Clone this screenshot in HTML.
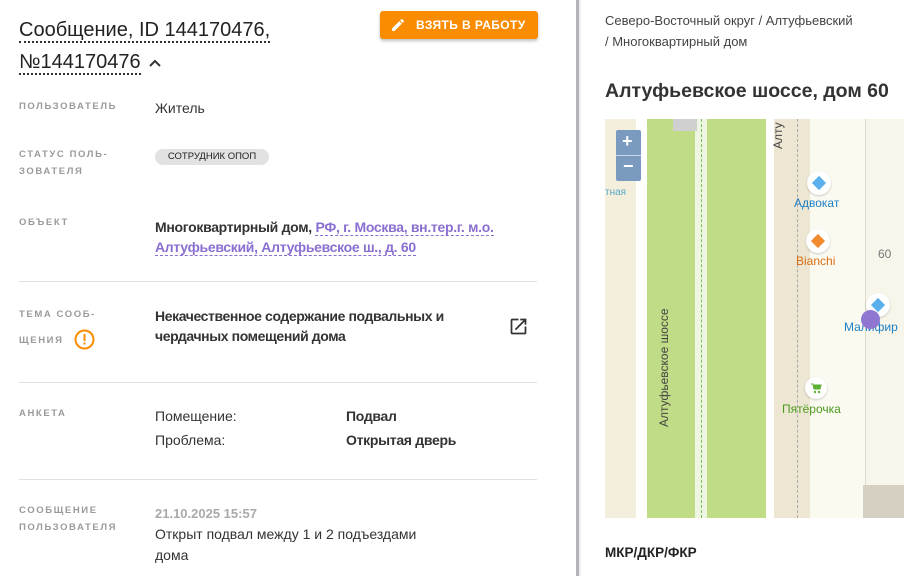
<!DOCTYPE html>
<html><head><meta charset="utf-8"><style>
*{margin:0;padding:0;box-sizing:border-box}
body{width:904px;height:576px;overflow:hidden;background:#fff;font-family:"Liberation Sans",sans-serif;color:#222;position:relative}
.a{position:absolute;white-space:nowrap}
.lab{font-size:9.5px;font-weight:bold;letter-spacing:1.6px;color:#9a9a9e;line-height:22px}
.val{font-size:14px;color:#333}
.hr{position:absolute;left:19px;width:518px;height:1px;background:#e2e2e2}
.dot{border-bottom:2px dotted #333}
.lnk{color:#8a6fd0;border-bottom:1px dashed #8a6fd0}
</style></head><body>
<div class="a" style="left:19px;top:14px;font-size:20px;line-height:32px;color:#222"><span class="dot">Сообщение, ID 144170476,</span><br><span class="dot">№144170476</span> <svg width="14" height="10" viewBox="0 0 14 10" style="margin-left:2px"><path d="M2 8 L7 3 L12 8" stroke="#333" stroke-width="2" fill="none"/></svg></div>
<div class="a" style="left:380px;top:11px;width:158px;height:28px;background:#f98c00;border-radius:3px;box-shadow:0 2px 3px rgba(0,0,0,.25);color:#fff;font-size:12px;font-weight:bold;letter-spacing:0.4px;line-height:28px;padding-left:36px">ВЗЯТЬ В РАБОТУ</div>
<svg class="a" style="left:390px;top:17px" width="16" height="16" viewBox="0 0 24 24"><path d="M3 17.25V21h3.75L17.8 9.94l-3.75-3.75L3 17.25zM20.7 7.04a1 1 0 000-1.41l-2.34-2.34a1 1 0 00-1.41 0l-1.830 1.83 3.75 3.75 1.83-1.83z" fill="#fff"/></svg>

<div class="a lab" style="left:19px;top:96px">ПОЛЬЗОВАТЕЛЬ</div>
<div class="a val" style="left:155px;top:100px">Житель</div>

<div class="a lab" style="left:19px;top:146px;line-height:17px">СТАТУС ПОЛЬ-<br>ЗОВАТЕЛЯ</div>
<div class="a" style="left:155px;top:149px;height:16px;width:114px;background:#e2e2e2;border-radius:8px;font-size:9.5px;color:#222;line-height:16px;text-align:center">СОТРУДНИК ОПОП</div>

<div class="a lab" style="left:19px;top:212px">ОБЪЕКТ</div>
<div class="a val" style="left:155px;top:217px;line-height:20px;font-weight:bold;color:#333;letter-spacing:-0.3px">Многоквартирный дом, <span class="lnk">РФ, г. Москва, вн.тер.г. м.о.</span><br><span class="lnk">Алтуфьевский, Алтуфьевское ш., д. 60</span></div>

<div class="hr" style="top:281px"></div>
<div class="a lab" style="left:19px;top:302px;line-height:26px">ТЕМА СООБ-<br>ЩЕНИЯ</div>
<svg class="a" style="left:74px;top:329px" width="21" height="21" viewBox="0 0 21 21"><circle cx="10.5" cy="10.5" r="9" fill="none" stroke="#f98c00" stroke-width="2"/><rect x="9.5" y="5" width="2" height="7" fill="#f98c00"/><rect x="9.5" y="13.5" width="2" height="2" fill="#f98c00"/></svg>
<div class="a val" style="left:155px;top:306px;line-height:20px;font-weight:bold;color:#333;letter-spacing:-0.4px">Некачественное содержание подвальных и<br>чердачных помещений дома</div>
<svg class="a" style="left:508px;top:316px" width="21" height="21" viewBox="0 0 24 24"><path d="M19 19H5V5h7V3H5a2 2 0 00-2 2v14a2 2 0 002 2h14a2 2 0 002-2v-7h-2v7zM14 3v2h3.59l-9.83 9.83 1.41 1.41L19 6.41V10h2V3h-7z" fill="#333"/></svg>

<div class="hr" style="top:382px"></div>
<div class="a lab" style="left:19px;top:403px">АНКЕТА</div>
<div class="a val" style="left:155px;top:404px;line-height:24px">Помещение:<br>Проблема:</div>
<div class="a val" style="left:346px;top:404px;line-height:24px;font-weight:bold;letter-spacing:-0.3px">Подвал<br>Открытая дверь</div>

<div class="hr" style="top:479px"></div>
<div class="a lab" style="left:19px;top:502px;line-height:17px">СООБЩЕНИЕ<br>ПОЛЬЗОВАТЕЛЯ</div>
<div class="a" style="left:155px;top:506px;font-size:13px;font-weight:bold;color:#aaa">21.10.2025 15:57</div>
<div class="a val" style="left:155px;top:524px;line-height:21px">Открыт подвал между 1 и 2 подъездами<br>дома</div>

<div class="a" style="left:576px;top:0;width:3px;height:576px;background:#b3b3b8"></div>
<div class="a" style="left:579px;top:0;width:2px;height:576px;background:#ededed"></div>

<div class="a" style="left:605px;top:10px;font-size:13px;line-height:21px;color:#444">Северо-Восточный округ / Алтуфьевский<br>/ Многоквартирный дом</div>
<div class="a" style="left:605px;top:80px;font-size:19.5px;font-weight:bold;color:#333">Алтуфьевское шоссе, дом 60</div>

<div class="a" style="left:605px;top:119px;width:299px;height:399px;overflow:hidden;background:#f8f6ea">
<div class="a" style="left:0;top:0;width:31px;height:399px;background:#f3efdc"></div>
<div class="a" style="left:31px;top:0;width:11px;height:399px;background:#fff"></div>
<div class="a" style="left:42px;top:0;width:48px;height:399px;background:#c0dc86"></div>
<div class="a" style="left:90px;top:0;width:12px;height:399px;background:#eef5e0"></div>
<div class="a" style="left:96px;top:0;width:0;height:399px;border-left:1px dashed #7cbf5a"></div>
<div class="a" style="left:102px;top:0;width:59px;height:399px;background:#c0dc86"></div>
<div class="a" style="left:161px;top:0;width:8px;height:399px;background:#fff"></div>
<div class="a" style="left:169px;top:0;width:36px;height:399px;background:#ece6d2"></div>
<div class="a" style="left:192px;top:0;width:0;height:399px;border-left:1px dashed #aaa"></div>
<div class="a" style="left:205px;top:0;width:55px;height:399px;background:#fbfaf1"></div>
<div class="a" style="left:260px;top:0;width:1px;height:399px;background:#e0dccd"></div>
<div class="a" style="left:258px;top:366px;width:41px;height:33px;background:#d6d0c2"></div>
<div class="a" style="left:68px;top:0;width:24px;height:12px;background:#d0d0d0"></div>
<div class="a" style="left:11px;top:11px;width:25px;height:51px;background:#7b9ac0;border-radius:2px"></div>
<div class="a" style="left:11px;top:36px;width:25px;height:1px;background:#cdd8e6"></div>
<div class="a" style="left:17px;top:12px;color:#fff;font-size:18px;font-weight:bold;line-height:20px">+</div>
<div class="a" style="left:18px;top:37px;color:#fff;font-size:18px;font-weight:bold;line-height:20px">−</div>
<div class="a" style="left:0;top:68px;font-size:10px;color:#5aa7c8">тная</div>
<div class="a" style="left:52px;top:308px;font-size:12px;color:#444;transform:rotate(-90deg);transform-origin:0 0">Алтуфьевское шоссе</div>
<div class="a" style="left:166px;top:30px;font-size:12px;color:#444;transform:rotate(-90deg);transform-origin:0 0">Алту</div>
<div class="a" style="left:202px;top:52px;width:24px;height:24px;border-radius:50%;background:#fff;box-shadow:0 1px 2px rgba(0,0,0,.2)"></div>
<div class="a" style="left:209px;top:59px;width:10px;height:10px;background:#5ab0ec;transform:rotate(45deg)"></div>
<div class="a" style="left:189px;top:77px;font-size:12px;color:#1d7fc4">Адвокат</div>
<div class="a" style="left:201px;top:110px;width:24px;height:24px;border-radius:50%;background:#fff;box-shadow:0 1px 2px rgba(0,0,0,.2)"></div>
<div class="a" style="left:208px;top:117px;width:10px;height:10px;background:#f28b30;transform:rotate(45deg)"></div>
<div class="a" style="left:191px;top:135px;font-size:12px;color:#d86c12">Bianchi</div>
<div class="a" style="left:273px;top:128px;font-size:12px;color:#777">60</div>
<div class="a" style="left:261px;top:174px;width:24px;height:24px;border-radius:50%;background:#fff;box-shadow:0 1px 2px rgba(0,0,0,.2)"></div>
<div class="a" style="left:268px;top:181px;width:10px;height:10px;background:#5ab0ec;transform:rotate(45deg)"></div>
<div class="a" style="left:239px;top:201px;font-size:12px;color:#1d7fc4">Малифир</div>
<div class="a" style="left:256px;top:191px;width:19px;height:19px;border-radius:50%;background:#8f76d0"></div>
<div class="a" style="left:200px;top:258px;width:22px;height:22px;border-radius:50%;background:#fff;box-shadow:0 1px 2px rgba(0,0,0,.2)"></div>
<svg class="a" style="left:205px;top:263px" width="12" height="12" viewBox="0 0 12 12"><path d="M1 2h2l1 5h6l1-4H4" fill="#5ab030" stroke="#5ab030" stroke-width="1"/><circle cx="5" cy="10" r="1.2" fill="#5ab030"/><circle cx="9" cy="10" r="1.2" fill="#5ab030"/></svg>
<div class="a" style="left:177px;top:283px;font-size:12px;color:#4c9a1e">Пятёрочка</div>
</div>

<div class="a" style="left:605px;top:545px;font-size:13.5px;font-weight:bold;color:#222">МКР/ДКР/ФКР</div>
</body></html>
